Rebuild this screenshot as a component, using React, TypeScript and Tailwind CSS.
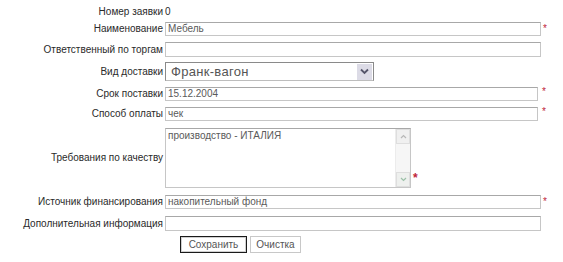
const font = "font-['Liberation_Sans',Arial,sans-serif]"

function Label({ children }: { children: React.ReactNode }) {
  return <div className="w-[165px] shrink-0 pr-[2px] text-right text-[10px] leading-none text-[#2a2a2a]">{children}</div>
}

function Star({ className = "" }: { className?: string }) {
  return <span className={`ml-[2px] text-[10px] leading-none text-[#c0243a] ${className}`}>*</span>
}

function Field({ value = "", width, h = "h-[14px]" }: { value?: string; width: string; h?: string }) {
  return (
    <div
      className={`${width} ${h} flex items-center border border-[#c6c6c6] border-t-[#a8a8a8] bg-white pl-[2px] text-[10px] leading-none text-[#5a5a5a]`}
    >
      {value}
    </div>
  )
}

export default function App() {
  return (
    <div className={`${font} h-[262px] w-[563px] bg-white pt-[5px]`}>
      {/* Номер */}
      <div className="flex h-[14px] items-center">
        <Label>Номер заявки</Label>
        <span className="text-[10px] leading-none text-[#2a2a2a]">0</span>
      </div>

      <div className="mt-[3px] flex items-center">
        <Label>Наименование</Label>
        <Field value="Мебель" width="w-[376px]" />
        <Star />
      </div>

      <div className="mt-[6px] flex items-center">
        <Label>Ответственный по торгам</Label>
        <Field width="w-[376px]" h="h-[15px]" />
      </div>

      {/* select */}
      <div className="mt-[5px] flex items-center">
        <Label>Вид доставки</Label>
        <div className="flex h-[19px] w-[209px] items-center border border-[#8a8a8a] border-b-[#bdbdbd] bg-white pl-[5px]">
          <span className="flex-1 text-[13px] leading-none tracking-[0.3px] text-[#555]">Франк-вагон</span>
          <div className="mr-[1px] flex h-[16px] w-[15px] items-center justify-center bg-[#dcdbe6]">
            <svg width="9" height="7" viewBox="0 0 9 7">
              <path d="M1 1.5 L4.5 5 L8 1.5" fill="none" stroke="#55556a" strokeWidth="1.8" />
            </svg>
          </div>
        </div>
      </div>

      <div className="mt-[6px] flex items-center">
        <Label>Срок поставки</Label>
        <Field value="15.12.2004" width="w-[373px]" />
        <Star className="ml-[4px] -translate-y-[2px] text-[#b06070]" />
      </div>

      <div className="mt-[6px] flex items-center">
        <Label>Способ оплаты</Label>
        <Field value="чек" width="w-[373px]" />
        <Star className="ml-[4px] -translate-y-[2px] text-[#b06070]" />
      </div>

      {/* textarea */}
      <div className="mt-[7px] flex items-end">
        <div className="flex h-[60px] items-center">
          <Label>Требования по качеству</Label>
        </div>
        <div className="flex h-[60px] w-[246px] border border-[#c6c6c6] border-t-[#a8a8a8] bg-white">
          <div className="flex-1 pl-[2px] pt-[2px] text-[10px] leading-none text-[#5a5a5a]">производство - ИТАЛИЯ</div>
          <div className="flex w-[15px] flex-col justify-between border-l border-[#ececec] bg-[#f6f6f6]">
            <div className="flex h-[15px] items-center justify-center border border-[#dedede] bg-[#f0f0f0]">
              <svg width="7" height="5" viewBox="0 0 7 5">
                <path d="M1 4 L3.5 1.5 L6 4" fill="none" stroke="#b8b8b8" strokeWidth="1.2" />
              </svg>
            </div>
            <div className="flex h-[15px] items-center justify-center border border-[#dedede] bg-[#eef0ee]">
              <svg width="7" height="5" viewBox="0 0 7 5">
                <path d="M1 1 L3.5 3.5 L6 1" fill="none" stroke="#9cc0a8" strokeWidth="1.2" />
              </svg>
            </div>
          </div>
        </div>
        <Star className="mb-[4px] text-[12px] font-bold text-[#b01030]" />
      </div>

      <div className="mt-[7px] flex items-center">
        <Label>Источник финансирования</Label>
        <Field value="накопительный фонд" width="w-[376px]" />
        <Star className="text-[#b06070]" />
      </div>

      <div className="mt-[7px] flex items-center">
        <Label>Дополнительная информация</Label>
        <Field width="w-[376px]" h="h-[15px]" />
      </div>

      {/* buttons */}
      <div className="mt-[5px] flex gap-[3px] pl-[180px]">
        <button className="flex h-[17px] w-[67px] items-center justify-center border border-[#1a1a1a] bg-white text-[10px] leading-none text-[#555]">
          <span className="flex h-full w-full items-center justify-center border border-[#d0d0d0]">Сохранить</span>
        </button>
        <button className="flex h-[17px] w-[51px] items-center justify-center border border-[#c8c8c8] bg-white text-[10px] leading-none text-[#555]">
          Очистка
        </button>
      </div>
    </div>
  )
}
